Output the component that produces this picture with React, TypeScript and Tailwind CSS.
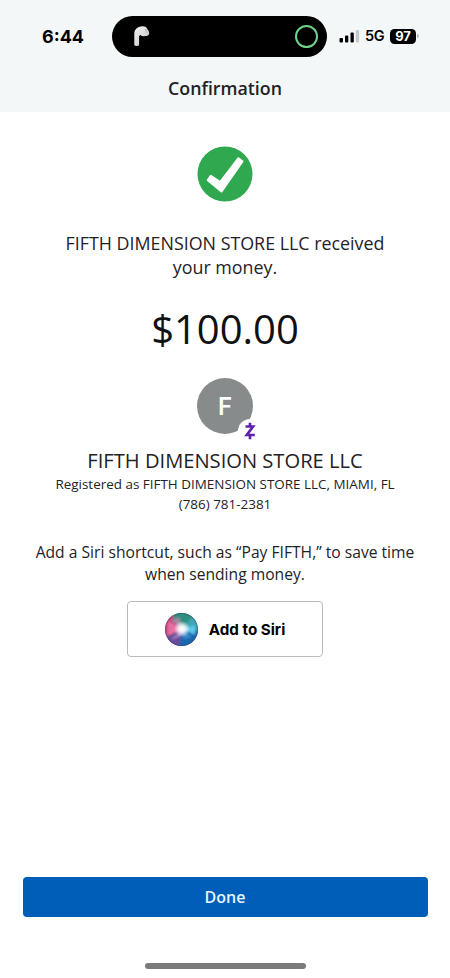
import React from 'react';

const AirPod = () => (
  <svg width="18" height="22" viewBox="0 0 18 22">
    <defs>
      <linearGradient id="pod" x1="0" y1="0" x2="1" y2="1">
        <stop offset="0" stopColor="#f4f4f4" />
        <stop offset="0.7" stopColor="#d2d2d2" />
        <stop offset="1" stopColor="#a0a0a0" />
      </linearGradient>
    </defs>
    <path d="M1.300 20.200V8.500C1.500 4.500 4 2 8 1.500c3.400-.8 5.500.3 6.500 3 1.300 1.200 2 3 1.600 4.500-.7 1.800-2.300 2.300-4 2-1.700.7-3.400.3-4.600-.9-.9.300-1.400.9-1.400 1.900v8.200c-1 .9-3.600.9-4.800 0z" fill="url(#pod)" />
    <path d="M12 4l2.500 4.500" stroke="#aaa" strokeWidth="0.8" />
  </svg>
);

const SiriOrb = () => (
  <svg width="33" height="33" viewBox="0 0 32 32">
    <defs>
      <clipPath id="orb"><circle cx="16" cy="16" r="16" /></clipPath>
      <filter id="soft" x="-50%" y="-50%" width="200%" height="200%"><feGaussianBlur stdDeviation="1.2" /></filter>
      <radialGradient id="glow">
        <stop offset="0" stopColor="#fff" />
        <stop offset="0.4" stopColor="#fff" stopOpacity="0.85" />
        <stop offset="1" stopColor="#fff" stopOpacity="0" />
      </radialGradient>
    </defs>
    <g clipPath="url(#orb)">
      <rect width="32" height="32" fill="#3b4f86" />
      <g filter="url(#soft)">
        <path d="M16 16L-4 26V2L8-2z" fill="#cf4a80" />
        <path d="M16 16L8 8 8-4h18l3 10z" fill="#2f8f7e" />
        <path d="M16 16L27 3l9 5v12z" fill="#3fa5b5" />
        <path d="M16 16l20 2-6 16H10z" fill="#1f68b0" />
        <path d="M16 16l-3 20-15-9z" fill="#6a4a98" />
        <path d="M17 16L3 8v14z" fill="#e76fa3" />
        <path d="M16 16L7 7l7-3z" fill="#a58aa4" />
        <path d="M16 15l13-3v9z" fill="#5bc8e8" />
        <path d="M17 17L5 26l9-3z" fill="#a488c8" />
        <path d="M17 17l1 8 8-2z" fill="#3c8fcc" />
      </g>
      <circle cx="16.500" cy="15.500" r="8" fill="url(#glow)" />
      <circle cx="16" cy="16" r="15.500" fill="none" stroke="#2f4468" strokeOpacity="0.4" />
    </g>
  </svg>
);

const StatusBar: React.FC = () => (
  <div className="flex h-[72px] items-center font-['Inter',sans-serif] text-black">
    <div className="w-[112px] pt-px pl-[42px] text-[18px] leading-none font-bold">6:44</div>
    <div className="flex h-[41px] w-[215px] items-center justify-between rounded-full bg-black pr-[9px] pl-[21px]">
      <AirPod />
      <div className="h-[23px] w-[23px] rounded-full border-[2.5px] border-[#6fd28a]" />
    </div>
    <div className="flex items-center pl-3">
      <svg width="21" height="14" viewBox="0 0 21 14">
        <rect x="0.500" y="9" width="3.500" height="4.500" rx="1" fill="#000" />
        <rect x="6" y="6.500" width="3.300" height="7" rx="1" fill="#000" />
        <rect x="11.500" y="3.500" width="3.300" height="10" rx="1" fill="#000" />
        <rect x="16.800" y="1" width="3.300" height="12.500" rx="1" fill="#c5c8c9" />
      </svg>
      <span className="ml-[5px] w-[20px] pt-px text-[14.5px] leading-none font-semibold tracking-tight">5G</span>
      <div className="ml-[5px] flex h-[15px] w-[26px] items-center justify-center rounded-[4.5px] bg-black text-[13px] leading-none font-bold text-white">97</div>
      <div className="ml-px h-[4px] w-[1.5px] rounded-r bg-[#b5b8b9]" />
    </div>
  </div>
);

const App: React.FC = () => {
  return (
    <div className="flex h-[978px] w-[450px] flex-col overflow-hidden bg-white font-['Open_Sans',sans-serif] text-[#1f2226]">
      <header className="h-[112px] bg-[#f4f7f8]">
        <StatusBar />
        <h1 className="text-center text-[17.8px] leading-8 font-semibold">Confirmation</h1>
      </header>

      <main className="flex flex-1 flex-col items-center text-center">
        <svg className="mt-[34px]" width="56" height="56" viewBox="0 0 56 56">
          <circle cx="28" cy="28" r="27.500" fill="#2fa84f" />
          <path d="M10.800 34.200l3-4.400 9.400 6.300L41.400 12.400l4 2.900-20.900 30z" fill="#fff" stroke="#fff" strokeWidth="2.200" strokeLinejoin="round" />
        </svg>

        <p className="mt-[29px] text-[17.85px] leading-6 whitespace-nowrap">
          FIFTH DIMENSION STORE LLC received<br />your money.
        </p>
        <p className="mt-[25px] text-[40px] leading-[50px] text-[#0f1114]">$100.00</p>

        <div className="relative mt-[24px] flex h-14 w-14 items-center justify-center rounded-full bg-[#888b8c] pt-0.5 font-['Inter',sans-serif] text-[24px] leading-none font-semibold text-white">
          F
          <div className="absolute top-[41px] left-[41px] flex h-[24px] w-[24px] items-center justify-center rounded-full bg-white">
            <svg width="12" height="18" viewBox="0 0 12 18" fill="none" stroke="#5f22ad" strokeWidth="2.700">
              <path d="M1.500 4.500h7.500L2.800 13h8M6 0.800v3.700M6 13v4.200" />
            </svg>
          </div>
        </div>

        <h2 className="mt-[12px] text-[20.15px] leading-7 whitespace-nowrap">FIFTH DIMENSION STORE LLC</h2>
        <p className="text-[13.450px] leading-5 whitespace-nowrap">
          Registered as FIFTH DIMENSION STORE LLC, MIAMI, FL<br />(786) 781-2381
        </p>
        <p className="mt-[28px] text-[15.65px] leading-[21.5px] whitespace-nowrap">
          Add a Siri shortcut, such as “Pay FIFTH,” to save time<br />when sending money.
        </p>

        <button className="mt-[16px] flex h-14 w-[196px] items-center justify-center gap-[11px] rounded-[4px] border border-[#b9bbbc] bg-white font-['Inter',sans-serif] text-[15.2px] font-bold text-black">
          <SiriOrb />
          <span className="pt-0.5">Add to Siri</span>
        </button>
      </main>

      <footer className="flex h-[101px] flex-col items-center">
        <button className="h-10 w-[405px] rounded-[4px] bg-[#005eb8] text-[16px] font-semibold text-[#e4f6ff]">Done</button>
        <div className="mt-[46px] h-[6px] w-[161px] rounded-full bg-[#7b7b7b]" />
      </footer>
    </div>
  );
};

export default App;
